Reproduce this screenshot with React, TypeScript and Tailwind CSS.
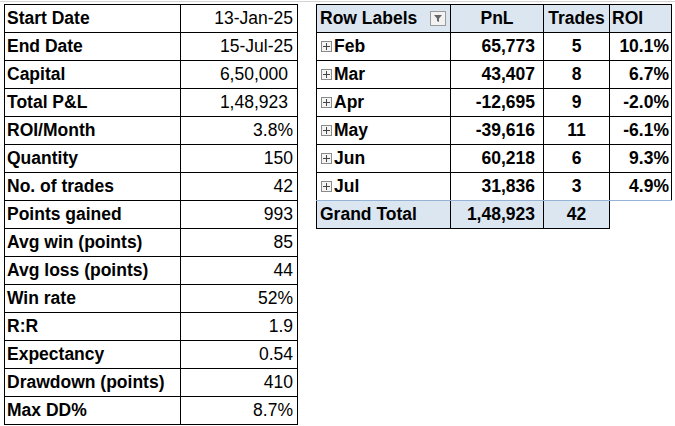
import React from "react";

const stats: [string, string, boolean?][] = [
  ["Start Date", "13-Jan-25"],
  ["End Date", "15-Jul-25"],
  ["Capital", "6,50,000", true],
  ["Total P&L", "1,48,923", true],
  ["ROI/Month", "3.8%"],
  ["Quantity", "150"],
  ["No. of trades", "42"],
  ["Points gained", "993"],
  ["Avg win (points)", "85"],
  ["Avg loss (points)", "44"],
  ["Win rate", "52%"],
  ["R:R", "1.9"],
  ["Expectancy", "0.54"],
  ["Drawdown (points)", "410"],
  ["Max DD%", "8.7%"],
];

const months = [
  ["Feb", "65,773", "5", "10.1%"],
  ["Mar", "43,407", "8", "6.7%"],
  ["Apr", "-12,695", "9", "-2.0%"],
  ["May", "-39,616", "11", "-6.1%"],
  ["Jun", "60,218", "6", "9.3%"],
  ["Jul", "31,836", "3", "4.9%"],
];

function Plus() {
  return (
    <span className="mr-[2px] inline-flex h-[11px] w-[11px] shrink-0 items-center justify-center border border-[#8a8a8a] bg-[#f4f4f4]">
      <svg width="7" height="7" viewBox="0 0 7 7">
        <path d="M0 3.5h7M3.5 0v7" stroke="#444" strokeWidth="1" />
      </svg>
    </span>
  );
}

export default function App() {
  return (
    <div
      className="relative h-[426px] w-[675px] overflow-hidden bg-white text-[17.5px] leading-none text-black"
      style={{ fontFamily: '"Liberation Sans", Arial, sans-serif' }}
    >
      <div className="h-[2px] border-b border-[#d4d4d4]" />
      <div className="flex items-start gap-[18px] pl-[4px] pt-[2px]">
        <div className="w-[294px] border-l border-t border-black">
          {stats.map(([k, v, pad]) => (
            <div key={k} className="flex h-[28px] border-b border-black">
              <div className="flex w-[176px] items-center whitespace-nowrap border-r border-black pl-[2px] font-bold">{k}</div>
              <div className={`flex flex-1 items-center justify-end border-r border-black ${pad ? "pr-[9px]" : "pr-[4px]"}`}>{v}</div>
            </div>
          ))}
        </div>
        <div className="w-[356px] border-l border-t border-black font-bold">
          <div className="flex h-[28px] border-b border-black bg-[#dce6f1]">
            <div className="flex w-[134px] items-center whitespace-nowrap border-r border-black pl-[3px]">
              Row Labels
              <span className="ml-auto mr-[4px] flex h-[15px] w-[16px] items-center justify-center border border-[#9a9a9a] bg-[#f2f2f2]">
                <svg width="10" height="9" viewBox="0 0 10 9">
                  <path d="M1 1h8L6 4.5V8L4 7V4.5z" fill="#666" />
                </svg>
              </span>
            </div>
            <div className="flex w-[93px] items-center justify-center border-r border-black">PnL</div>
            <div className="flex w-[66px] items-center justify-center border-r border-black">Trades</div>
            <div className="flex flex-1 items-center border-r border-black pl-[2px]">ROI</div>
          </div>
          {months.map(([m, p, t, r]) => (
            <div key={m} className="flex h-[28px] border-b border-black">
              <div className="flex w-[134px] items-center border-r border-black pl-[4px]">
                <Plus />
                {m}
              </div>
              <div className="flex w-[93px] items-center justify-end border-r border-black pr-[8px]">{p}</div>
              <div className="flex w-[66px] items-center justify-center border-r border-black">{t}</div>
              <div className="flex flex-1 items-center justify-end border-r border-black pr-[2px]">{r}</div>
            </div>
          ))}
          <div className="-ml-px -mt-px flex h-[29px] border-t border-[#95b3d7]">
            <div className="flex w-[135px] items-center whitespace-nowrap border-x border-b border-black bg-[#dce6f1] pl-[3px]">Grand Total</div>
            <div className="flex w-[93px] items-center justify-end border-b border-r border-black bg-[#dce6f1] pr-[8px]">1,48,923</div>
            <div className="flex w-[66px] items-center justify-center border-b border-r border-black bg-[#dce6f1]">42</div>
          </div>
        </div>
      </div>
    </div>
  );
}
